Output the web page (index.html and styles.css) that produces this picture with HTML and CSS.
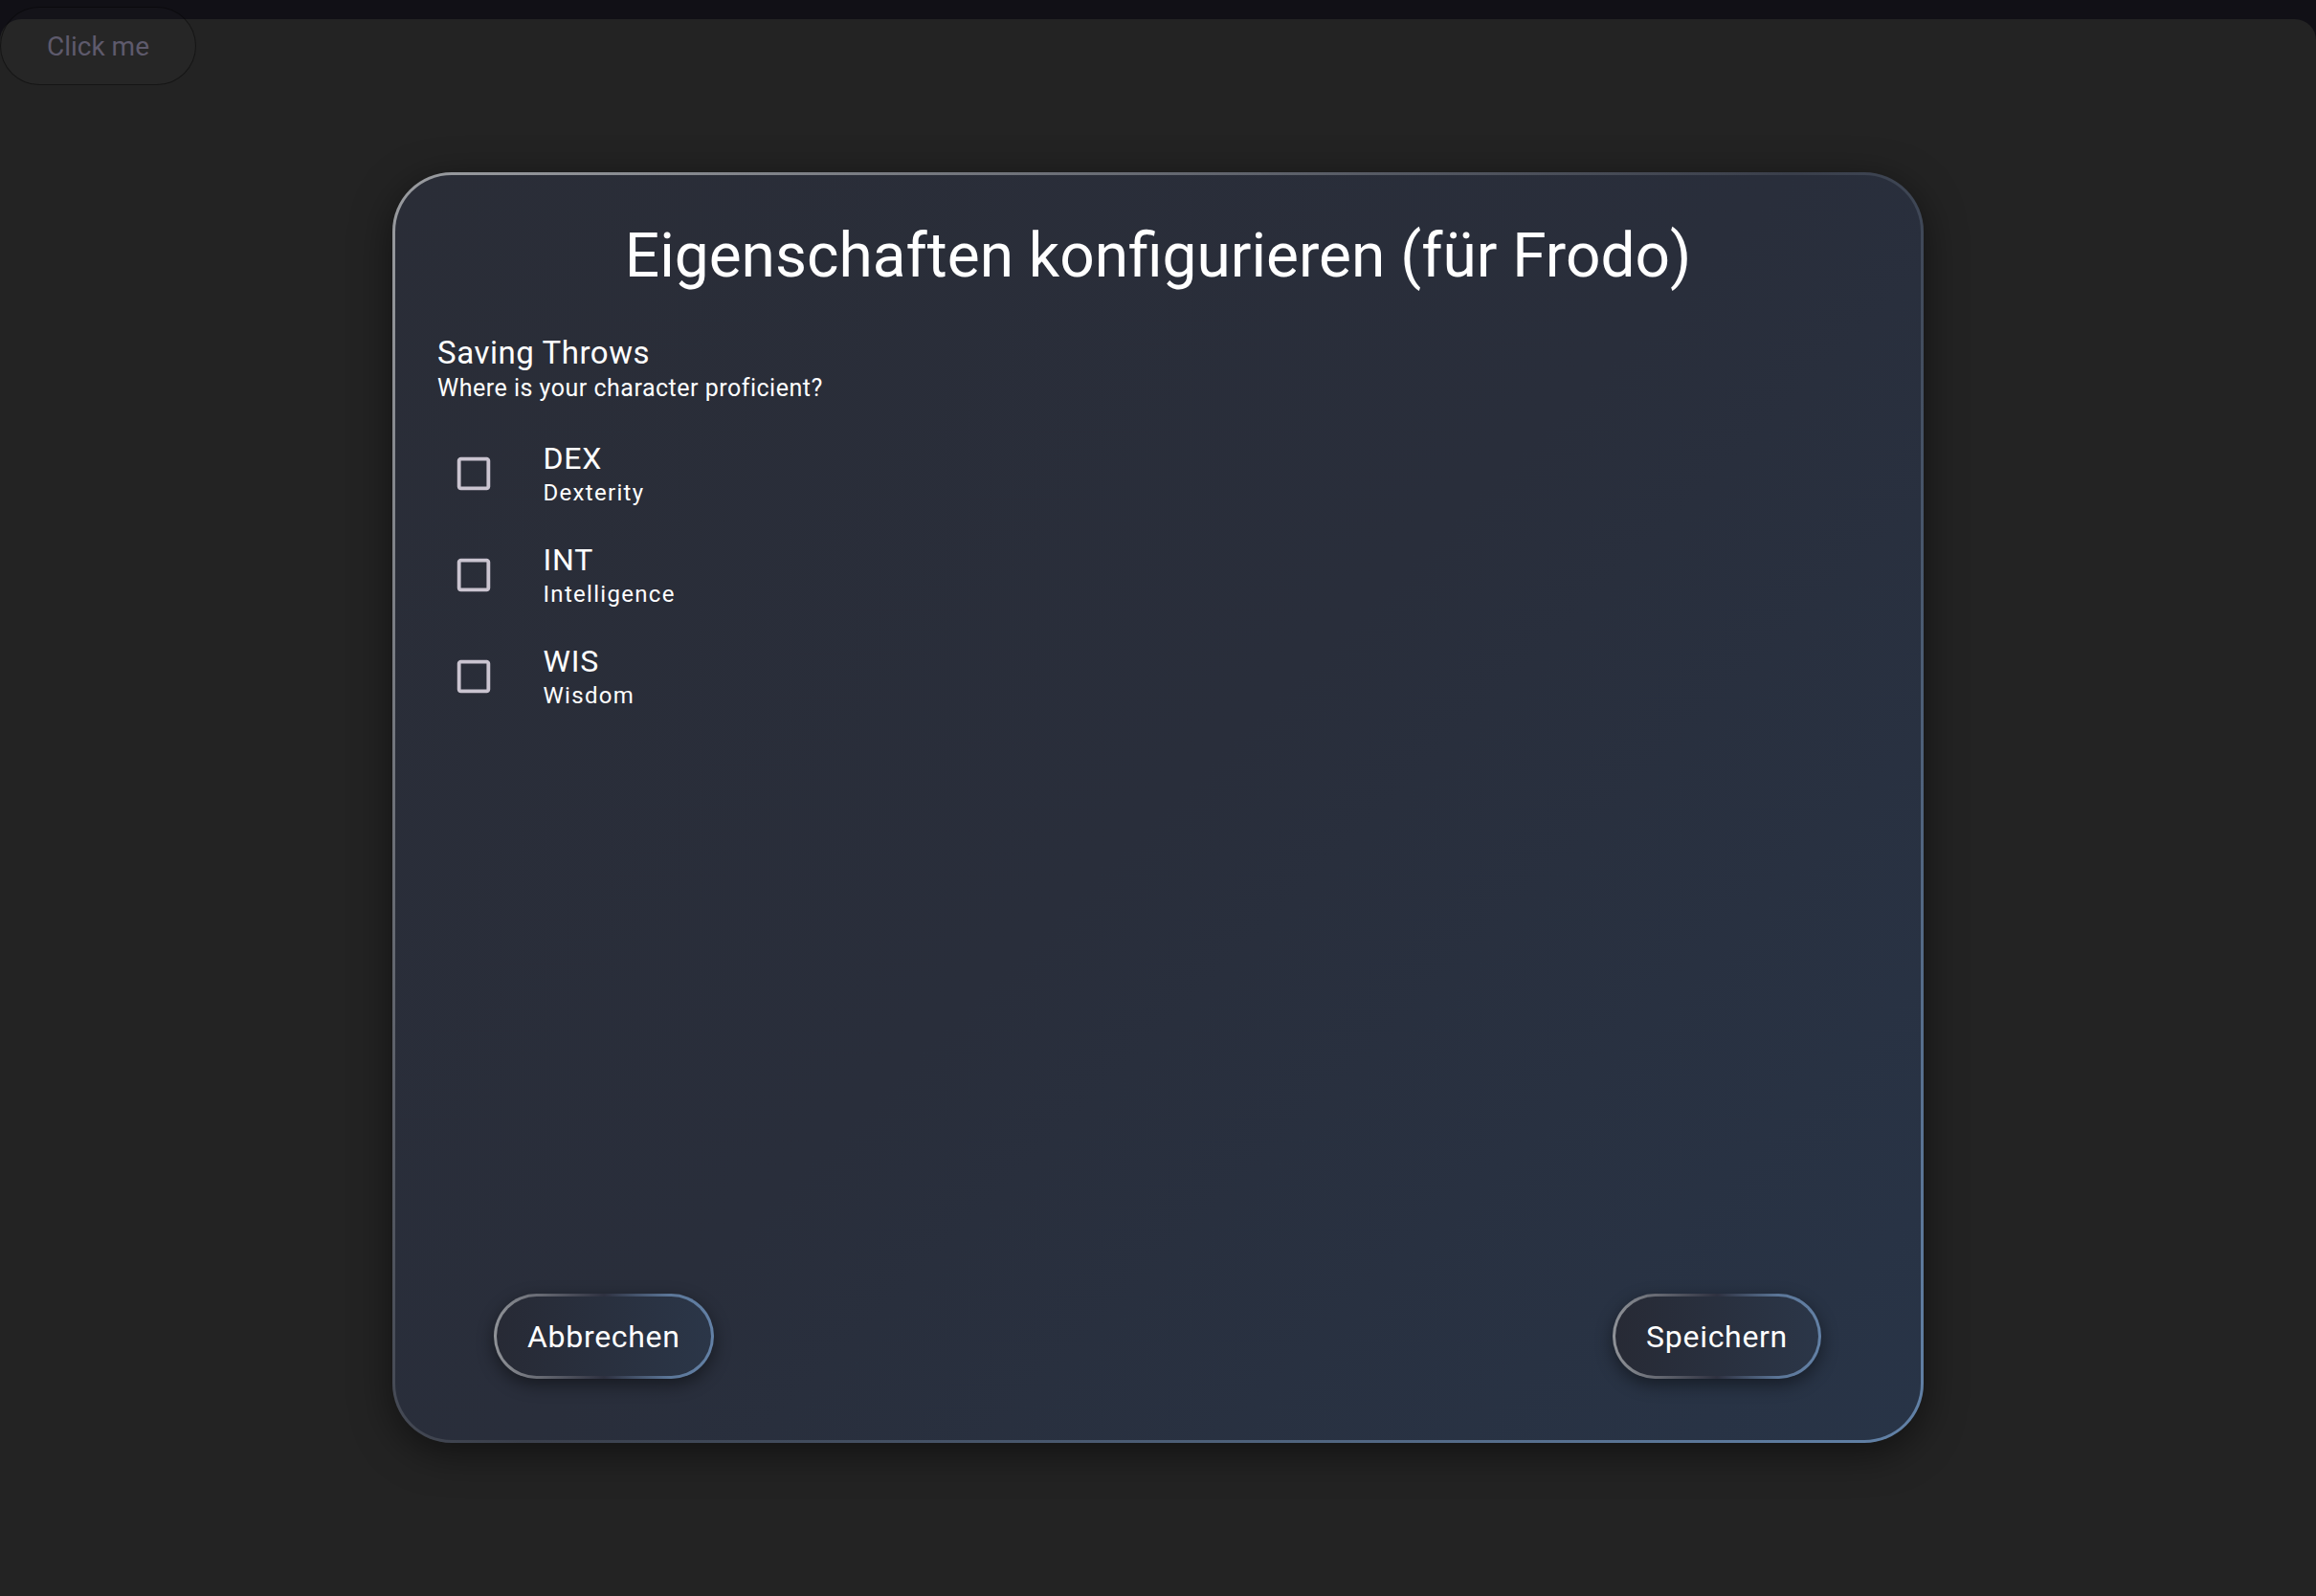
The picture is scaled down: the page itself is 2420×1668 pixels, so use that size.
FILE: index.html
```html
<!DOCTYPE html>
<html lang="de">
<head>
<meta charset="utf-8">
<title>Eigenschaften konfigurieren</title>
<link rel="stylesheet" href="styles.css">
</head>
<body>
<button class="click-me">Click me</button>
<main class="stage">
  <section class="dialog">
    <h1 class="dialog-title">Eigenschaften konfigurieren (für Frodo)</h1>
    <div class="dialog-content">
      <h2 class="section-title">Saving Throws</h2>
      <p class="section-sub">Where is your character proficient?</p>
      <ul class="options">
        <li class="option">
          <svg class="cb" viewBox="0 0 24 24"><path d="M19 5v14H5V5h14m0-2H5c-1.1 0-2 .9-2 2v14c0 1.1.9 2 2 2h14c1.1 0 2-.9 2-2V5c0-1.1-.9-2-2-2z"/></svg>
          <div class="option-text"><div class="primary">DEX</div><div class="secondary">Dexterity</div></div>
        </li>
        <li class="option">
          <svg class="cb" viewBox="0 0 24 24"><path d="M19 5v14H5V5h14m0-2H5c-1.1 0-2 .9-2 2v14c0 1.1.9 2 2 2h14c1.1 0 2-.9 2-2V5c0-1.1-.9-2-2-2z"/></svg>
          <div class="option-text"><div class="primary">INT</div><div class="secondary">Intelligence</div></div>
        </li>
        <li class="option">
          <svg class="cb" viewBox="0 0 24 24"><path d="M19 5v14H5V5h14m0-2H5c-1.1 0-2 .9-2 2v14c0 1.1.9 2 2 2h14c1.1 0 2-.9 2-2V5c0-1.1-.9-2-2-2z"/></svg>
          <div class="option-text"><div class="primary">WIS</div><div class="secondary">Wisdom</div></div>
        </li>
      </ul>
    </div>
    <div class="dialog-actions">
      <button class="btn">Abbrechen</button>
      <button class="btn">Speichern</button>
    </div>
  </section>
</main>
</body>
</html>
```

FILE: styles.css
```css
html, body {
  margin: 0;
  height: 100%;
}
body {
  position: relative;
  background: #111016;
  font-family: Roboto, "Noto Sans", sans-serif;
  overflow: hidden;
  padding-top: 20px;
  box-sizing: border-box;
}
.click-me {
  position: absolute;
  left: 0;
  top: 7px;
  width: 205px;
  height: 82px;
  border-radius: 41px;
  background: rgba(255, 255, 255, 0.014);
  border: 1px solid rgba(0, 0, 0, 0.45);
  color: #5e5a6c;
  font-family: Roboto, sans-serif;
  font-size: 28px;
  padding: 0;
  z-index: 2;
}
.stage {
  height: 1648px;
  background: #232323;
  border-radius: 22px 22px 0 0;
  display: flex;
  align-items: center;
  justify-content: center;
}
.dialog {
  width: 1600px;
  height: 1328px;
  box-sizing: border-box;
  border: 3px solid transparent;
  border-radius: 62px;
  background:
    linear-gradient(135deg, #2a2d37 0%, #292e3b 50%, #283447 100%) padding-box,
    linear-gradient(135deg, #9a9ca0 0%, #3a3f4b 50%, #6282a8 100%) border-box;
  box-shadow: 0 10px 40px rgba(0, 0, 0, 0.5);
  display: flex;
  flex-direction: column;
  padding-top: 46px;
  color: #fff;
}
.dialog-title {
  margin: 0;
  font-size: 64px;
  line-height: 77px;
  font-weight: 400;
  text-align: center;
}
.dialog-content {
  padding: 0 44px;
}
.section-title {
  margin: 44px 0 0;
  font-size: 33px;
  line-height: 38px;
  font-weight: 400;
  letter-spacing: 0.55px;
}
.section-sub {
  margin: 4px 0 0;
  font-size: 25px;
  line-height: 28px;
  letter-spacing: 0.5px;
}
.options {
  list-style: none;
  margin: 0;
  padding: 23px 0 0;
}
.option {
  display: flex;
  align-items: center;
  padding: 18px 0 19px;
}
.cb {
  width: 46px;
  height: 46px;
  fill: #cac4d0;
  margin: 0 49.5px 2px 15px;
  flex: none;
}
.primary {
  font-size: 32px;
  line-height: 36px;
  letter-spacing: 0.8px;
}
.secondary {
  margin-top: 3px;
  font-size: 24px;
  line-height: 30px;
  letter-spacing: 1.3px;
}
.dialog-actions {
  margin-top: auto;
  display: flex;
  justify-content: space-between;
  padding: 0 104px 64px 103px;
}
.btn {
  height: 89px;
  box-sizing: border-box;
  padding: 0 32px;
  border: 3px solid transparent;
  border-radius: 45px;
  background:
    linear-gradient(90deg, #272a35, #2b3648) padding-box,
    linear-gradient(90deg, #909398 0%, #2e3140 50%, #5c7799 80%, #6381a6 100%) border-box;
  color: #fff;
  font-family: Roboto, sans-serif;
  font-size: 32px;
  letter-spacing: 0.7px;
  box-shadow: 0 6px 18px rgba(0, 0, 0, 0.45);
}
```
